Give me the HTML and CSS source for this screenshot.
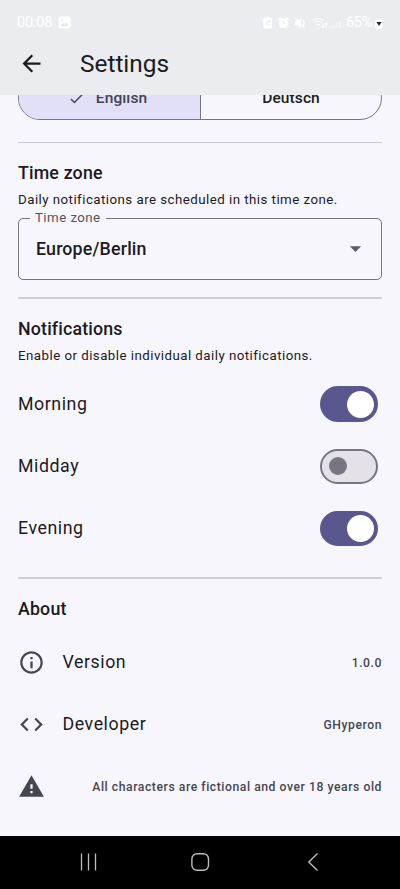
FILE: index.html
```html
<!DOCTYPE html>
<html lang="en">
<head>
<meta charset="utf-8">
<meta name="viewport" content="width=device-width, initial-scale=1">
<title>Settings</title>
<link rel="stylesheet" href="styles.css">
</head>
<body>
<header class="header">
  <div class="status">
    <div class="status-left">
      <span class="clock">00:08</span>
      <svg width="13" height="13" viewBox="0 0 13 13"><rect x=".5" y=".5" width="12" height="12" rx="2.5" fill="#fff"/><path d="M2.5 10l2.5-3 1.6 1.8L8.5 6l2.3 4z" fill="#e7e8ec"/><circle cx="4" cy="4" r="1" fill="#e7e8ec"/></svg>
    </div>
    <div class="status-right">
      <svg class="status-icons" width="84" height="14" viewBox="0 0 84 14">
        <path d="M2.5 1.8h2V.8h3v1h1.600q.8 0 .8.800v9q0 .8-.8.800h-7q-.8 0-.8-.8v-9q0-.8.800-.8z" fill="#fff"/>
        <path d="M7.500 5.200a2.200 2.200 0 1 0 .2 3.400M7.800 4.200v2h-2" fill="none" stroke="#e2e3e7" stroke-width=".8"/>
        <circle cx="21.500" cy="7.300" r="4.700" fill="#fff"/><path d="M16.500 4l2.500-2.200M26.500 4L24 1.800M18 12l1-1.300M25 12l-1-1.300" stroke="#fff" stroke-width="1.600"/><path d="M21.500 5v2.500h2" fill="none" stroke="#e2e3e7" stroke-width=".8"/>
        <path d="M33 5h2.500L39 1.800v10.400L35.500 9H33z" fill="#fff"/><path d="M33 2l9.500 10M41 4q2 3 0 6" fill="none" stroke="#fff" stroke-width="1.300"/>
        <path d="M50 5q6-5 12 0M52 7q4-3.500 8 0M54 9q2-1.800 4 0M61 7v5M64 7v5M59.500 10l1.500 2 1.500-2M62.500 9l1.500-2 1.500 2" fill="none" stroke="#fff" stroke-width="1"/>
        <path d="M69 12v-2M72 12V9M75 12V7M78 12V5" stroke="#fff" stroke-opacity=".75" stroke-width="1"/>
      </svg>
      <span class="battery-text">65%</span>
      <svg width="8" height="12" viewBox="0 0 8 12"><rect y="1" width="8" height="10" rx="2" fill="#fff"/><path d="M1.500 4h5L4 8z" fill="#222"/></svg>
    </div>
  </div>
  <div class="appbar">
    <svg width="27" height="27" viewBox="0 0 24 24"><path d="M20 11H7.830l5.590-5.590L12 4l-8 8 8 8 1.410-1.410L7.830 13H20z" fill="#1b1b21"/></svg>
    <h1>Settings</h1>
  </div>
</header>

<main class="content">
  <div class="segment-clip">
    <div class="segments">
      <div class="segment selected">
        <svg width="17" height="17" viewBox="0 0 24 24"><path d="M9 16.170L4.830 12l-1.420 1.410L9 19 21 7l-1.410-1.410z" fill="#44434f"/></svg>
        <span>English</span>
      </div>
      <div class="segment"><span>Deutsch</span></div>
    </div>
  </div>

  <section class="zone">
    <h2>Time zone</h2>
    <p class="desc">Daily notifications are scheduled in this time zone.</p>
    <fieldset class="select">
      <legend>Time zone</legend>
      <div class="select-row">
        <span>Europe/Berlin</span>
        <svg width="27" height="27" viewBox="0 0 24 24"><path d="M7 10l5 5 5-5z" fill="#5e5e66"/></svg>
      </div>
    </fieldset>
  </section>

  <section class="notifications">
    <h2>Notifications</h2>
    <p class="desc">Enable or disable individual daily notifications.</p>
    <div class="rows toggles">
      <div class="row"><span class="label">Morning</span><span class="switch on"></span></div>
      <div class="row"><span class="label">Midday</span><span class="switch"></span></div>
      <div class="row"><span class="label">Evening</span><span class="switch on"></span></div>
    </div>
  </section>

  <section class="about">
    <h2>About</h2>
    <div class="rows">
      <div class="row">
        <svg width="27" height="27" viewBox="0 0 24 24"><path d="M11 7h2v2h-2zm0 4h2v6h-2zm1-9C6.480 2 2 6.480 2 12s4.480 10 10 10 10-4.480 10-10S17.520 2 12 2zm0 18c-4.410 0-8-3.590-8-8s3.590-8 8-8 8 3.590 8 8-3.590 8-8 8z" fill="#46464f"/></svg>
        <span class="label">Version</span><span class="value">1.0.0</span>
      </div>
      <div class="row">
        <svg width="27" height="27" viewBox="0 0 24 24"><path d="M9.400 16.600L4.800 12l4.600-4.600L8 6l-6 6 6 6zm5.200 0l4.600-4.600-4.600-4.600L16 6l6 6-6 6z" fill="#46464f"/></svg>
        <span class="label">Developer</span><span class="value">GHyperon</span>
      </div>
      <div class="row">
        <svg width="27" height="27" viewBox="0 0 24 24"><path d="M1 21h22L12 2zm12-3h-2v-2h2zm0-4h-2v-4h2z" fill="#46464f"/></svg>
        <span class="value">All characters are fictional and over 18 years old</span>
      </div>
    </div>
  </section>
</main>

<nav class="navbar">
  <svg width="20" height="20" viewBox="0 0 20 20"><path d="M3.500 1.500v17M10.500 1.500v17M17.500 1.500v17" stroke="#bdbdbd" stroke-width="1.300"/></svg>
  <svg width="20" height="20" viewBox="0 0 20 20"><rect x="1.900" y="1.700" width="16.600" height="16.600" rx="5" fill="none" stroke="#bdbdbd" stroke-width="1.400"/></svg>
  <svg width="20" height="20" viewBox="0 0 20 20"><path d="M15.500 1.500L6.800 10l8.700 8.500" fill="none" stroke="#bdbdbd" stroke-width="1.400"/></svg>
</nav>
</body>
</html>
```
FILE: styles.css
```css
* { box-sizing: border-box; }
body {
  margin: 0;
  width: 400px;
  height: 889px;
  overflow: hidden;
  display: flex;
  flex-direction: column;
  background: #f7f6fc;
  color: #1b1b21;
  font-family: Roboto, "Liberation Sans", sans-serif;
}
svg { display: block; flex: none; }
h1, h2, p { margin: 0; font-weight: 400; }

.header { height: 95px; flex: none; background: #ebecf0; }
.status {
  height: 45px;
  padding: 0 17px;
  display: flex;
  align-items: center;
  justify-content: space-between;
  color: #fff;
}
.status-left, .status-right { display: flex; align-items: center; }
.status-left { gap: 6px; }
.clock { font-size: 14.500px; width: 35px; letter-spacing: -0.2px; }
.battery-text { font-size: 14.500px; width: 27px; letter-spacing: -0.3px; }
.status-right svg:last-child { margin-left: 2px; margin-top: 2px; }
.appbar { height: 37px; padding-left: 17.500px; display: flex; align-items: center; gap: 35.500px; }
h1 { font-size: 24.400px; line-height: 31px; }

.content { flex: 1; min-height: 0; padding: 0 18px; }
.segment-clip { height: 25px; overflow: hidden; display: flex; align-items: flex-end; }
.segments {
  flex: 1;
  height: 44px;
  display: flex;
  border: 1px solid #777680;
  border-radius: 22px;
  overflow: hidden;
}
.segment {
  flex: 1 1 0;
  display: flex;
  align-items: center;
  justify-content: center;
  gap: 11px;
  font-size: 15.500px;
  font-weight: 500;
  letter-spacing: 0.11px;
}
.selected {
  flex: 0 0 182px;
  padding-right: 4px;
  background: #e2dff9;
  color: #44434f;
  border-right: 1px solid #777680;
}

section { border-top: 1px solid #c8c7cf; }
h2 { font-size: 17.800px; line-height: 26px; font-weight: 500; letter-spacing: 0.17px; }
.zone { margin-top: 22px; padding-top: 17px; height: 155px; }
.desc { font-size: 13.300px; line-height: 18px; letter-spacing: 0.46px; margin-top: 5px; }
.select {
  margin: 0;
  height: 71px;
  padding: 0 12px 0 17px;
  border: 1.500px solid #777680;
  border-radius: 5px;
}
.select legend {
  padding: 0 5px;
  margin-left: -6px;
  font-size: 13.300px;
  line-height: 18px;
  letter-spacing: 0.44px;
  color: #55545d;
}
.select-row {
  height: 43px;
  display: flex;
  align-items: center;
  justify-content: space-between;
  font-size: 17.800px;
  font-weight: 500;
  letter-spacing: 0.17px;
}
.notifications, .about { border-top: 2px solid #d0cfd6; padding-top: 17px; }
.notifications { height: 280px; }
.rows { display: flex; flex-direction: column; }
.toggles { margin-top: 8px; padding-right: 4px; }
.row { height: 62.200px; display: flex; align-items: center; }
.label { font-size: 17.800px; letter-spacing: 0.55px; padding-bottom: 1px; }
.row svg + .label { margin-left: 18px; }
.row svg { margin-left: -0.5px; }
.value { margin-left: auto; padding-top: 2px; font-size: 12.200px; font-weight: 500; letter-spacing: 0.55px; color: #46464f; }
.switch {
  margin-left: auto;
  width: 58px;
  height: 35.500px;
  border: 2px solid #777680;
  border-radius: 18px;
  background: #e4e1e9;
  display: flex;
  align-items: center;
  padding: 0 7px;
}
.switch::before { content: ""; width: 18px; height: 18px; border-radius: 50%; background: #777680; }
.switch.on { border-color: #5a578f; background: #5a578f; justify-content: flex-end; padding: 0 2.500px; }
.switch.on::before { width: 27px; height: 27px; background: #fff; }
.about .rows { margin-top: 9px; }

.navbar {
  flex: none;
  height: 53px;
  background: #000;
  padding: 0 78px 1px;
  display: flex;
  align-items: center;
  justify-content: space-between;
}
```
